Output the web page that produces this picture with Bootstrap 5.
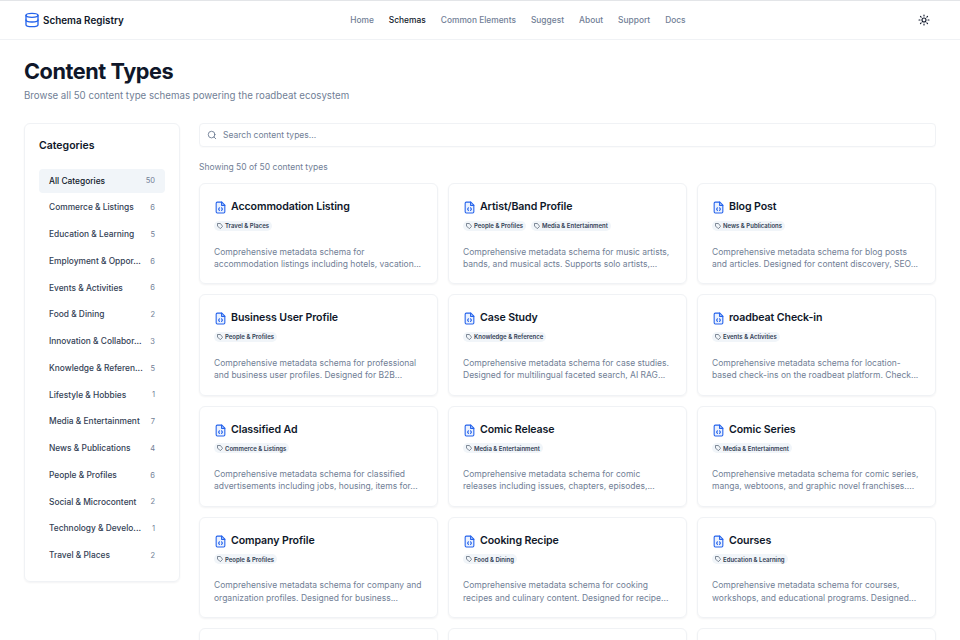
<!DOCTYPE html>
<html lang="en">
<head>
    <meta charset="UTF-8">
    <meta name="viewport" content="width=device-width, initial-scale=1.0">
    <link href="https://cdn.jsdelivr.net/npm/bootstrap@5.3.0/dist/css/bootstrap.min.css" rel="stylesheet">
    <title>Content Types</title>
    <style>
        html, body { height: 640px; overflow: hidden; }
        body { font-family: Inter, "Liberation Sans", sans-serif; background: #fff; color: #0f172a; border-top: 1px solid #e3e5e8; }
        .top-bar { height: 39px; border-bottom: 1px solid #f0f2f5; padding: 0 24px; }
        .brand-wrap { gap: 3px; }
        .brand-name { font-size: 9.9px; font-weight: 600; color: #0f172a; }
        .top-links { gap: 15px; margin-left: -6px; }
        .top-links a { font-size: 8.4px; font-weight: 500; color: #718096; text-decoration: none; }
        .top-links a.active { color: #0f172a; }
        .sun-icon { margin-right: 6px; }
        .page-wrap { padding: 0 24px; }
        .page-title { font-size: 21.7px; font-weight: 700; letter-spacing: -.45px; line-height: 28px; margin: 17px 0 3px; color: #0f172a; }
        .page-sub { font-size: 9.7px; color: #718096; line-height: 16px; margin-bottom: 19px; }
        .main-row { gap: 19px; }
        .side-col { width: 156px; flex: none; }
        .side-box { border: 1px solid #f0f2f5; border-radius: 6px; box-shadow: 0 1px 2px rgba(15,23,42,.05); padding: 14px 14px 11px; }
        .side-title { font-size: 10.5px; font-weight: 600; line-height: 16px; margin: 0 0 15px; }
        .cat-row { height: 24px; margin-bottom: 2.75px; padding: 0 10px; border-radius: 4px; font-size: 8.4px; font-weight: 500; color: #334155; white-space: nowrap; }
        .cat-row.active { background: #f1f5f9; color: #0f172a; }
        .cat-row span:last-child { font-size: 7.5px; color: #718096; font-weight: 400; }
        .main-col { min-width: 0; flex: 1; }
        .search-box { height: 24px; border: 1px solid #f0f2f5; border-radius: 4px; padding-left: 7px; gap: 6px; font-size: 8.5px; color: #718096; box-shadow: 0 1px 1px rgba(15,23,42,.02); }
        .count-line { font-size: 8.5px; color: #718096; line-height: 12px; margin: 14px 0 10px; }
        .type-grid { display: grid; grid-template-columns: repeat(3, 1fr); gap: 10px; }
        .type-card { height: 101.25px; border: 1px solid #f0f2f5; border-radius: 6px; box-shadow: 0 1px 2px rgba(15,23,42,.05); padding: 14px 14px 0; }
        .type-head { gap: 4px; margin: 0 0 3.5px; height: 19px; }
        .type-name { font-size: 10.6px; font-weight: 600; letter-spacing: -.1px; color: #0f172a; margin: 0; }
        .chip { display: inline-flex; align-items: center; gap: 2px; height: 10px; padding: 0 3px; border-radius: 8px; background: #f1f5f9; font-size: 6px; font-weight: 600; color: #334155; white-space: nowrap; }
        .chips { gap: 5px; height: 10px; margin-bottom: 15px; }
        .type-desc { font-size: 8.5px; line-height: 12.4px; color: #718096; margin: 0; white-space: pre-line; }
    </style>
</head>
<body>

<nav class="top-bar d-flex align-items-center justify-content-between">
    <div class="brand-wrap d-flex align-items-center">
        <svg width="16" height="16" viewBox="0 0 24 24" fill="none" stroke="#2563eb" stroke-width="2" stroke-linecap="round" stroke-linejoin="round"><ellipse cx="12" cy="5" rx="9" ry="3"/><path d="M3 5v14a9 3 0 0 0 18 0V5"/><path d="M3 12a9 3 0 0 0 18 0"/></svg>
        <span class="brand-name">Schema Registry</span>
    </div>
    <div class="top-links d-flex">
        <a href="#">Home</a><a href="#" class="active">Schemas</a><a href="#">Common Elements</a><a href="#">Suggest</a><a href="#">About</a><a href="#">Support</a><a href="#">Docs</a>
    </div>
    <svg class="sun-icon" width="12" height="12" viewBox="0 0 24 24" fill="none" stroke="#0f172a" stroke-width="2.2" stroke-linecap="round"><circle cx="12" cy="12" r="4"/><path d="M12 2v2M12 20v2M4.9 4.9l1.4 1.4M17.7 17.7l1.4 1.4M2 12h2M20 12h2M6.3 17.7l-1.4 1.4M19.1 4.9l-1.4 1.4"/></svg>
</nav>

<div class="page-wrap">
    <h1 class="page-title">Content Types</h1>
    <p class="page-sub">Browse all 50 content type schemas powering the roadbeat ecosystem</p>

    <div class="main-row d-flex align-items-start">
        <aside class="side-col">
            <div class="side-box" id="catBox"><h2 class="side-title">Categories</h2></div>
        </aside>
        <main class="main-col">
            <div class="search-box d-flex align-items-center">
                <svg width="10" height="10" viewBox="0 0 24 24" fill="none" stroke="#64748b" stroke-width="2" stroke-linecap="round"><circle cx="11" cy="11" r="8"/><path d="m21 21-4.3-4.3"/></svg>
                <span>Search content types...</span>
            </div>
            <div class="count-line">Showing 50 of 50 content types</div>
            <div class="type-grid" id="typeGrid"></div>
        </main>
    </div>
</div>

<script src="https://cdn.jsdelivr.net/npm/bootstrap@5.3.0/dist/js/bootstrap.bundle.min.js"></script>
<script>
    const categories = [
        ['All Categories', 50], ['Commerce & Listings', 6], ['Education & Learning', 5],
        ['Employment & Oppor...', 6], ['Events & Activities', 6], ['Food & Dining', 2],
        ['Innovation & Collabor...', 3], ['Knowledge & Referen...', 5], ['Lifestyle & Hobbies', 1],
        ['Media & Entertainment', 7], ['News & Publications', 4], ['People & Profiles', 6],
        ['Social & Microcontent', 2], ['Technology & Develo...', 1], ['Travel & Places', 2]
    ];
    const types = [
        ['Accommodation Listing', ['Travel & Places'], 'Comprehensive metadata schema for\naccommodation listings including hotels, vacation...'],
        ['Artist/Band Profile', ['People & Profiles', 'Media & Entertainment'], 'Comprehensive metadata schema for music artists,\nbands, and musical acts. Supports solo artists,...'],
        ['Blog Post', ['News & Publications'], 'Comprehensive metadata schema for blog posts\nand articles. Designed for content discovery, SEO...'],
        ['Business User Profile', ['People & Profiles'], 'Comprehensive metadata schema for professional\nand business user profiles. Designed for B2B...'],
        ['Case Study', ['Knowledge & Reference'], 'Comprehensive metadata schema for case studies.\nDesigned for multilingual faceted search, AI RAG...'],
        ['roadbeat Check-in', ['Events & Activities'], 'Comprehensive metadata schema for location-\nbased check-ins on the roadbeat platform. Check...'],
        ['Classified Ad', ['Commerce & Listings'], 'Comprehensive metadata schema for classified\nadvertisements including jobs, housing, items for...'],
        ['Comic Release', ['Media & Entertainment'], 'Comprehensive metadata schema for comic\nreleases including issues, chapters, episodes,...'],
        ['Comic Series', ['Media & Entertainment'], 'Comprehensive metadata schema for comic series,\nmanga, webtoons, and graphic novel franchises....'],
        ['Company Profile', ['People & Profiles'], 'Comprehensive metadata schema for company and\norganization profiles. Designed for business...'],
        ['Cooking Recipe', ['Food & Dining'], 'Comprehensive metadata schema for cooking\nrecipes and culinary content. Designed for recipe...'],
        ['Courses', ['Education & Learning'], 'Comprehensive metadata schema for courses,\nworkshops, and educational programs. Designed...'],
        ['', [], ''], ['', [], ''], ['', [], '']
    ];
    const fileIcon = '<svg width="13" height="13" viewBox="0 0 24 24" fill="#eaf1fe" stroke="#2563eb" stroke-width="2" stroke-linecap="round" stroke-linejoin="round"><path d="M14.5 2H6a2 2 0 0 0-2 2v16a2 2 0 0 0 2 2h12a2 2 0 0 0 2-2V7.5z"/><path d="M14 2v6h6" fill="none"/><path d="M10 12.5 8.5 15l1.5 2.5M14 12.5l1.5 2.5-1.5 2.5" fill="none"/></svg>';
    const tagIcon = '<svg width="6" height="6" viewBox="0 0 24 24" fill="none" stroke="#334155" stroke-width="2.4" stroke-linecap="round" stroke-linejoin="round"><path d="M12 2H2v10l9.3 9.3a2.4 2.4 0 0 0 3.4 0l6.6-6.6a2.4 2.4 0 0 0 0-3.4z"/></svg>';

    const catBox = document.getElementById('catBox');
    categories.forEach((cat, i) => {
        const row = document.createElement('div');
        row.className = 'cat-row d-flex align-items-center justify-content-between' + (i === 0 ? ' active' : '');
        row.innerHTML = `<span>${cat[0].replace(/&/g, '&amp;')}</span><span>${cat[1]}</span>`;
        catBox.appendChild(row);
    });

    const typeGrid = document.getElementById('typeGrid');
    types.forEach(type => {
        const card = document.createElement('div');
        card.className = 'type-card';
        if (type[0]) {
            const chips = type[1].map(c => `<span class="chip">${tagIcon}${c.replace(/&/g, '&amp;')}</span>`).join('');
            card.innerHTML = `
                <div class="type-head d-flex align-items-center">${fileIcon}<h3 class="type-name">${type[0]}</h3></div>
                <div class="chips d-flex">${chips}</div>
                <p class="type-desc">${type[2]}</p>`;
        }
        typeGrid.appendChild(card);
    });
</script>

</body>
</html>
